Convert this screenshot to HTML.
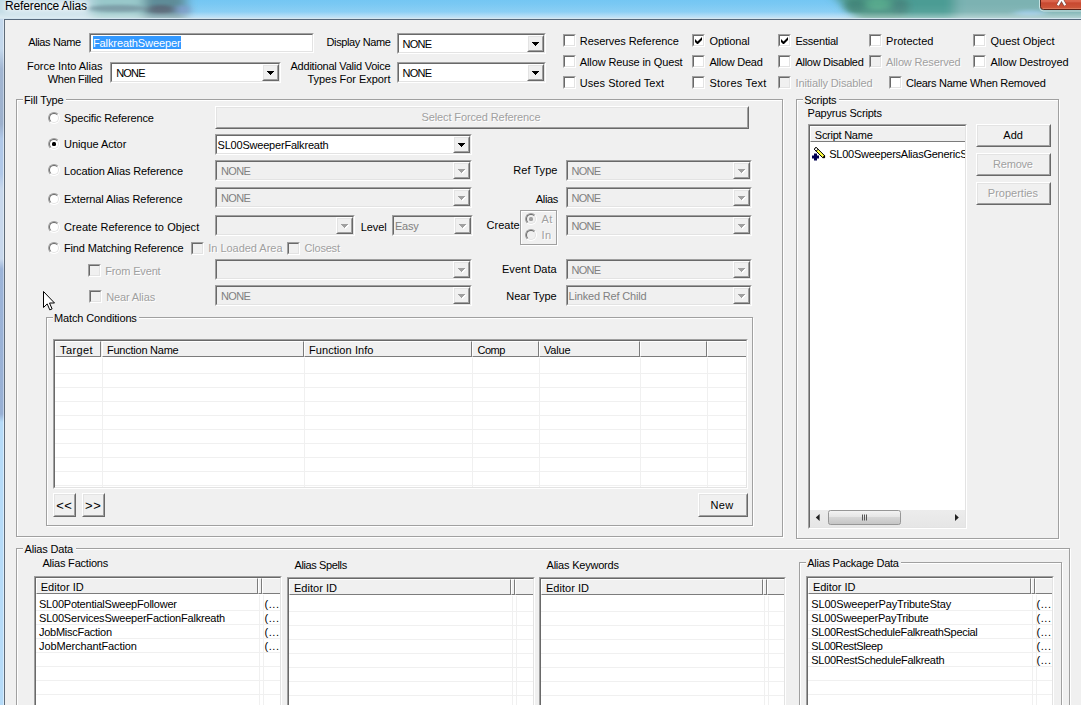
<!DOCTYPE html><html><head><meta charset="utf-8"><title>Reference Alias</title><style>
html,body{margin:0;padding:0;background:#f0f0f0;}
#w{position:relative;width:1081px;height:705px;overflow:hidden;background:#f0f0f0;font:11px/13px 'Liberation Sans',sans-serif;color:#000;}
#w div,#w span,#w svg.a,#w i,#w b{position:absolute;box-sizing:content-box;}
.t{white-space:pre;height:13px;line-height:13px;font-size:11px;}
.dis{color:#a0a0a0;text-shadow:1px 1px 0 #fff;}
.sunk{border:1px solid;border-color:#a0a0a0 #fff #fff #a0a0a0;}
.sunk::after{content:"";position:absolute;left:0;top:0;right:0;bottom:0;border:1px solid;border-color:#696969 #e3e3e3 #e3e3e3 #696969;pointer-events:none;}
.btn{border:1px solid;border-color:#fff #696969 #696969 #fff;background:#f0f0f0;}
.btn::after{content:"";position:absolute;left:0;top:0;right:0;bottom:0;border:1px solid;border-color:#e3e3e3 #a0a0a0 #a0a0a0 #e3e3e3;}
.grp{border:1px solid #a0a0a0;box-shadow:1px 1px 0 #fff, inset 1px 1px 0 #fff;}
.hd{border:1px solid;border-color:#fff #7c7c7c #7c7c7c #fff;background:#f0f0f0;}
.rad{width:10px;height:10px;border:1px solid;border-color:#a0a0a0 #fff #fff #a0a0a0;border-radius:50%;}
.rad b{left:0;top:0;width:8px;height:8px;border-radius:50%;border:1px solid;border-color:#696969 #e3e3e3 #e3e3e3 #696969;}
#tb{left:0;top:0;}
</style></head><body><div id="w"><svg class="a" id="tb" width="1081" height="20" viewBox="0 0 1081 20">
<defs>
<linearGradient id="bg" x1="0" y1="0" x2="0" y2="1"><stop offset="0" stop-color="#74c6f3"/><stop offset="0.6" stop-color="#84ccf4"/><stop offset="1" stop-color="#9fd0f0"/></linearGradient>
<linearGradient id="cl" x1="0" y1="0" x2="0" y2="1"><stop offset="0" stop-color="#e4785c"/><stop offset="0.45" stop-color="#d86048"/><stop offset="0.5" stop-color="#c84830"/><stop offset="0.85" stop-color="#cc5438"/><stop offset="1" stop-color="#e8987c"/></linearGradient>
<linearGradient id="wl" x1="0" y1="0" x2="0" y2="1"><stop offset="0" stop-color="#fff" stop-opacity="0"/><stop offset="0.55" stop-color="#fff" stop-opacity="0.06"/><stop offset="1" stop-color="#fff" stop-opacity="0.42"/></linearGradient>
<filter id="b8" x="-20%" y="-300%" width="140%" height="700%"><feGaussianBlur stdDeviation="6 3"/></filter>
<filter id="b4" x="-50%" y="-300%" width="200%" height="700%"><feGaussianBlur stdDeviation="4 1.6"/></filter>
<filter id="b2" x="-20%" y="-300%" width="140%" height="700%"><feGaussianBlur stdDeviation="2.5 2"/></filter>
</defs>
<rect width="1081" height="20" fill="url(#bg)"/>
<g filter="url(#b8)">
<rect x="-30" y="-10" width="122" height="40" fill="#c2dce6"/>
<rect x="92" y="-10" width="52" height="40" fill="#98c8ca"/>
<rect x="144" y="-10" width="42" height="40" fill="#5e8c98"/>
<path d="M830 -10L1110 -10 1110 30 866 30z" fill="#4c9484"/>
<rect x="905" y="-10" width="50" height="40" fill="#4c9c94"/>
<rect x="955" y="-10" width="160" height="40" fill="#7cb2b2"/>
</g>
<g filter="url(#b4)">
<ellipse cx="118" cy="8.5" rx="30" ry="3.5" fill="#7a9ca6"/>
<ellipse cx="161" cy="9.5" rx="14" ry="4.5" fill="#566676"/>
<ellipse cx="183" cy="10" rx="6" ry="5" fill="#7c9ccc"/>
<ellipse cx="856" cy="6" rx="10" ry="7" fill="#42867a"/>
<ellipse cx="878" cy="4" rx="12" ry="6" fill="#56a88c"/>
<ellipse cx="900" cy="7" rx="8" ry="8" fill="#468680"/>
<ellipse cx="1030" cy="13" rx="16" ry="3" fill="#94c6de"/>
</g>
<g filter="url(#b2)"><rect x="4" y="1" width="84" height="11" rx="4" fill="#fff" opacity="0.55"/></g>
<rect x="0" y="4" width="1081" height="14" fill="url(#wl)"/>
<rect x="0" y="18" width="1081" height="1" fill="#d4e6f0"/>
<rect x="4" y="19" width="1077" height="1" fill="#56697c"/>
<rect x="1039.5" y="-4" width="52" height="15" rx="4" fill="none" stroke="#e0f0f0" opacity="0.75"/>
<rect x="1040.5" y="-4" width="50" height="13.5" rx="3" fill="url(#cl)" stroke="#5a2016"/>
<path d="M1057.8 5.4L1061.5 -1.2 1065.2 5.4" fill="none" stroke="#7a4a44" stroke-width="3.4"/>
<path d="M1057.8 5.2L1061.5 -1.2 1065.2 5.2" fill="none" stroke="#fff" stroke-width="2.2"/>
</svg>
<div style="left:0;top:19px;width:3px;height:686px;background:linear-gradient(to bottom,#c4d8ec 0,#c4d8ec 30px,#a2b6d2 50px,#9cb0cc 105px,#b0c8e8 120px,#b0c8e8 155px,#c8d8ec 170px,#c8d8ec 240px,#9cb4d8 250px,#98b0d4 395px,#b6dbf8 403px,#b6dbf8 100%)"></div>
<div style="left:3px;top:19px;width:1px;height:686px;background:linear-gradient(to bottom,#dce8f4 0,#dce8f4 30px,#c4d2e4 50px,#c4d2e4 105px,#d4e2f2 120px,#dce8f4 170px,#dce8f4 240px,#c0d0e8 250px,#c0d0e8 395px,#d8ecfc 403px,#d8ecfc 100%)"></div>
<div style="left:4px;top:19px;width:1px;height:686px;background:#5f6b78"></div>
<div class="sunk" style="left:89px;top:33px;width:223px;height:18px;background:#fff;"></div>
<div class="" style="left:93px;top:36px;width:88px;height:13px;background:#3399ff;"></div>
<div class="sunk" style="left:397px;top:33px;width:147px;height:19px;background:#fff;"></div>
<div class="btn" style="left:527px;top:35px;width:15px;height:15px;"></div>
<svg class="a" style="left:532px;top:42px" width="8" height="5" viewBox="0 0 8 5"><path d="M0 0h7v1h-1v1h-1v1h-1v1h-1v-1h-1v-1h-1v-1h-1z" fill="#000"/></svg>
<div class="sunk" style="left:110px;top:62px;width:169px;height:19px;background:#fff;"></div>
<div class="btn" style="left:262px;top:64px;width:15px;height:15px;"></div>
<svg class="a" style="left:267px;top:71px" width="8" height="5" viewBox="0 0 8 5"><path d="M0 0h7v1h-1v1h-1v1h-1v1h-1v-1h-1v-1h-1v-1h-1z" fill="#000"/></svg>
<div class="sunk" style="left:397px;top:62px;width:147px;height:19px;background:#fff;"></div>
<div class="btn" style="left:527px;top:64px;width:15px;height:15px;"></div>
<svg class="a" style="left:532px;top:71px" width="8" height="5" viewBox="0 0 8 5"><path d="M0 0h7v1h-1v1h-1v1h-1v1h-1v-1h-1v-1h-1v-1h-1z" fill="#000"/></svg>
<div class="sunk" style="left:563px;top:34px;width:11px;height:11px;background:#fff;"></div>
<div class="sunk" style="left:563px;top:55px;width:11px;height:11px;background:#fff;"></div>
<div class="sunk" style="left:563px;top:76px;width:11px;height:11px;background:#fff;"></div>
<div class="sunk" style="left:692px;top:34px;width:11px;height:11px;background:#fff;"></div>
<svg class="a" style="left:695px;top:37px" width="7" height="7" viewBox="0 0 7 7"><path d="M0 2v3l2 2h1l4-4v-3l-4.5 4.5z" fill="#000"/></svg>
<div class="sunk" style="left:692px;top:55px;width:11px;height:11px;background:#fff;"></div>
<div class="sunk" style="left:692px;top:76px;width:11px;height:11px;background:#fff;"></div>
<div class="sunk" style="left:778px;top:34px;width:11px;height:11px;background:#fff;"></div>
<svg class="a" style="left:781px;top:37px" width="7" height="7" viewBox="0 0 7 7"><path d="M0 2v3l2 2h1l4-4v-3l-4.5 4.5z" fill="#000"/></svg>
<div class="sunk" style="left:778px;top:55px;width:11px;height:11px;background:#fff;"></div>
<div class="sunk" style="left:778px;top:76px;width:11px;height:11px;background:#f0f0f0;"></div>
<div class="sunk" style="left:869px;top:34px;width:11px;height:11px;background:#fff;"></div>
<div class="sunk" style="left:869px;top:55px;width:11px;height:11px;background:#f0f0f0;"></div>
<div class="sunk" style="left:973px;top:34px;width:11px;height:11px;background:#fff;"></div>
<div class="sunk" style="left:973px;top:55px;width:11px;height:11px;background:#fff;"></div>
<div class="sunk" style="left:889px;top:76px;width:11px;height:11px;background:#fff;"></div>
<div class="grp" style="left:16px;top:99px;width:765px;height:436px;"></div>
<div class="" style="left:22.5px;top:93px;width:43.5px;height:13px;background:#f0f0f0;"></div>
<div class="rad" style="left:48px;top:112px;background:#fff"><b></b></div>
<div class="rad" style="left:48px;top:138px;background:#fff"><b></b><i style="position:absolute;left:3px;top:3px;width:4px;height:4px;border-radius:1.5px;background:#000"></i></div>
<div class="rad" style="left:48px;top:164px;background:#fff"><b></b></div>
<div class="rad" style="left:48px;top:193px;background:#fff"><b></b></div>
<div class="rad" style="left:48px;top:221px;background:#fff"><b></b></div>
<div class="rad" style="left:48px;top:242px;background:#fff"><b></b></div>
<div class="sunk" style="left:191px;top:242px;width:11px;height:11px;background:#f0f0f0;"></div>
<div class="sunk" style="left:287px;top:242px;width:11px;height:11px;background:#f0f0f0;"></div>
<div class="sunk" style="left:88px;top:264px;width:11px;height:11px;background:#f0f0f0;"></div>
<div class="sunk" style="left:89px;top:290px;width:11px;height:11px;background:#f0f0f0;"></div>
<div class="btn" style="left:215px;top:106px;width:532px;height:21px;"></div>
<div class="sunk" style="left:215px;top:134px;width:255px;height:19px;background:#fff;"></div>
<div class="btn" style="left:453px;top:136px;width:15px;height:15px;"></div>
<svg class="a" style="left:458px;top:143px" width="8" height="5" viewBox="0 0 8 5"><path d="M0 0h7v1h-1v1h-1v1h-1v1h-1v-1h-1v-1h-1v-1h-1z" fill="#000"/></svg>
<div class="sunk" style="left:215px;top:160px;width:255px;height:19px;background:#f0f0f0;"></div>
<div class="btn" style="left:453px;top:162px;width:15px;height:15px;"></div>
<svg class="a" style="left:458px;top:169px" width="8" height="5" viewBox="0 0 8 5"><path transform="translate(1 1)" d="M0 0h7v1h-1v1h-1v1h-1v1h-1v-1h-1v-1h-1v-1h-1z" fill="#fff"/><path d="M0 0h7v1h-1v1h-1v1h-1v1h-1v-1h-1v-1h-1v-1h-1z" fill="#a0a0a0"/></svg>
<div class="sunk" style="left:215px;top:187px;width:255px;height:19px;background:#f0f0f0;"></div>
<div class="btn" style="left:453px;top:189px;width:15px;height:15px;"></div>
<svg class="a" style="left:458px;top:196px" width="8" height="5" viewBox="0 0 8 5"><path transform="translate(1 1)" d="M0 0h7v1h-1v1h-1v1h-1v1h-1v-1h-1v-1h-1v-1h-1z" fill="#fff"/><path d="M0 0h7v1h-1v1h-1v1h-1v1h-1v-1h-1v-1h-1v-1h-1z" fill="#a0a0a0"/></svg>
<div class="sunk" style="left:215px;top:215px;width:138px;height:19px;background:#f0f0f0;"></div>
<div class="btn" style="left:336px;top:217px;width:15px;height:15px;"></div>
<svg class="a" style="left:341px;top:224px" width="8" height="5" viewBox="0 0 8 5"><path transform="translate(1 1)" d="M0 0h7v1h-1v1h-1v1h-1v1h-1v-1h-1v-1h-1v-1h-1z" fill="#fff"/><path d="M0 0h7v1h-1v1h-1v1h-1v1h-1v-1h-1v-1h-1v-1h-1z" fill="#a0a0a0"/></svg>
<div class="sunk" style="left:392px;top:215px;width:79px;height:19px;background:#f0f0f0;"></div>
<div class="btn" style="left:454px;top:217px;width:15px;height:15px;"></div>
<svg class="a" style="left:459px;top:224px" width="8" height="5" viewBox="0 0 8 5"><path transform="translate(1 1)" d="M0 0h7v1h-1v1h-1v1h-1v1h-1v-1h-1v-1h-1v-1h-1z" fill="#fff"/><path d="M0 0h7v1h-1v1h-1v1h-1v1h-1v-1h-1v-1h-1v-1h-1z" fill="#a0a0a0"/></svg>
<div class="sunk" style="left:215px;top:259px;width:255px;height:19px;background:#f0f0f0;"></div>
<div class="btn" style="left:453px;top:261px;width:15px;height:15px;"></div>
<svg class="a" style="left:458px;top:268px" width="8" height="5" viewBox="0 0 8 5"><path transform="translate(1 1)" d="M0 0h7v1h-1v1h-1v1h-1v1h-1v-1h-1v-1h-1v-1h-1z" fill="#fff"/><path d="M0 0h7v1h-1v1h-1v1h-1v1h-1v-1h-1v-1h-1v-1h-1z" fill="#a0a0a0"/></svg>
<div class="sunk" style="left:215px;top:285px;width:255px;height:19px;background:#f0f0f0;"></div>
<div class="btn" style="left:453px;top:287px;width:15px;height:15px;"></div>
<svg class="a" style="left:458px;top:294px" width="8" height="5" viewBox="0 0 8 5"><path transform="translate(1 1)" d="M0 0h7v1h-1v1h-1v1h-1v1h-1v-1h-1v-1h-1v-1h-1z" fill="#fff"/><path d="M0 0h7v1h-1v1h-1v1h-1v1h-1v-1h-1v-1h-1v-1h-1z" fill="#a0a0a0"/></svg>
<div class="sunk" style="left:566px;top:160px;width:184px;height:19px;background:#f0f0f0;"></div>
<div class="btn" style="left:733px;top:162px;width:15px;height:15px;"></div>
<svg class="a" style="left:738px;top:169px" width="8" height="5" viewBox="0 0 8 5"><path transform="translate(1 1)" d="M0 0h7v1h-1v1h-1v1h-1v1h-1v-1h-1v-1h-1v-1h-1z" fill="#fff"/><path d="M0 0h7v1h-1v1h-1v1h-1v1h-1v-1h-1v-1h-1v-1h-1z" fill="#a0a0a0"/></svg>
<div class="sunk" style="left:566px;top:187px;width:184px;height:19px;background:#f0f0f0;"></div>
<div class="btn" style="left:733px;top:189px;width:15px;height:15px;"></div>
<svg class="a" style="left:738px;top:196px" width="8" height="5" viewBox="0 0 8 5"><path transform="translate(1 1)" d="M0 0h7v1h-1v1h-1v1h-1v1h-1v-1h-1v-1h-1v-1h-1z" fill="#fff"/><path d="M0 0h7v1h-1v1h-1v1h-1v1h-1v-1h-1v-1h-1v-1h-1z" fill="#a0a0a0"/></svg>
<div class="sunk" style="left:566px;top:215px;width:184px;height:19px;background:#f0f0f0;"></div>
<div class="btn" style="left:733px;top:217px;width:15px;height:15px;"></div>
<svg class="a" style="left:738px;top:224px" width="8" height="5" viewBox="0 0 8 5"><path transform="translate(1 1)" d="M0 0h7v1h-1v1h-1v1h-1v1h-1v-1h-1v-1h-1v-1h-1z" fill="#fff"/><path d="M0 0h7v1h-1v1h-1v1h-1v1h-1v-1h-1v-1h-1v-1h-1z" fill="#a0a0a0"/></svg>
<div class="sunk" style="left:566px;top:259px;width:184px;height:19px;background:#f0f0f0;"></div>
<div class="btn" style="left:733px;top:261px;width:15px;height:15px;"></div>
<svg class="a" style="left:738px;top:268px" width="8" height="5" viewBox="0 0 8 5"><path transform="translate(1 1)" d="M0 0h7v1h-1v1h-1v1h-1v1h-1v-1h-1v-1h-1v-1h-1z" fill="#fff"/><path d="M0 0h7v1h-1v1h-1v1h-1v1h-1v-1h-1v-1h-1v-1h-1z" fill="#a0a0a0"/></svg>
<div class="sunk" style="left:566px;top:285px;width:184px;height:19px;background:#f0f0f0;"></div>
<div class="btn" style="left:733px;top:287px;width:15px;height:15px;"></div>
<svg class="a" style="left:738px;top:294px" width="8" height="5" viewBox="0 0 8 5"><path transform="translate(1 1)" d="M0 0h7v1h-1v1h-1v1h-1v1h-1v-1h-1v-1h-1v-1h-1z" fill="#fff"/><path d="M0 0h7v1h-1v1h-1v1h-1v1h-1v-1h-1v-1h-1v-1h-1z" fill="#a0a0a0"/></svg>
<div class="grp" style="left:520px;top:210px;width:35px;height:33px;"></div>
<div class="rad" style="left:525px;top:213px;background:#f0f0f0"><b></b><i style="position:absolute;left:3px;top:3px;width:4px;height:4px;border-radius:1.5px;background:#a0a0a0"></i></div>
<div class="rad" style="left:525px;top:228.5px;background:#f0f0f0"><b></b></div>
<svg class="a" style="left:42px;top:290px" width="14" height="22" viewBox="0 0 14 22"><path d="M1.5 1.5v16l3.7-3.6 2.6 6 2.3-1-2.6-5.9h5z" fill="#fff" stroke="#000" stroke-width="1"/></svg>
<div class="grp" style="left:46px;top:317px;width:705px;height:207px;"></div>
<div class="" style="left:52.5px;top:311px;width:86.75px;height:13px;background:#f0f0f0;"></div>
<div class="sunk lv" style="left:53px;top:339px;width:693px;height:148px;background:#fff;overflow:hidden;"><div style="left:1px;top:1px;width:691px;height:16px;background:#f0f0f0;"></div><div class="hd" style="left:1px;top:1px;width:44px;height:14px"></div><div class="hd" style="left:48px;top:1px;width:200px;height:14px"></div><div class="hd" style="left:250px;top:1px;width:166px;height:14px"></div><div class="hd" style="left:418px;top:1px;width:65px;height:14px"></div><div class="hd" style="left:485px;top:1px;width:99px;height:14px"></div><div class="hd" style="left:586px;top:1px;width:65px;height:14px"></div><div class="hd" style="left:653px;top:1px;width:58px;height:14px"></div><div style="left:1px;top:20px;width:691px;height:127px;background:repeating-linear-gradient(to bottom,transparent 0,transparent 13px,#f0f0f0 13px,#f0f0f0 14px)"></div><div style="left:48px;top:18px;width:1px;height:129px;background:#f0f0f0"></div><div style="left:250px;top:18px;width:1px;height:129px;background:#f0f0f0"></div><div style="left:418px;top:18px;width:1px;height:129px;background:#f0f0f0"></div><div style="left:485px;top:18px;width:1px;height:129px;background:#f0f0f0"></div><div style="left:586px;top:18px;width:1px;height:129px;background:#f0f0f0"></div><div style="left:653px;top:18px;width:1px;height:129px;background:#f0f0f0"></div></div>
<div class="btn" style="left:53px;top:493px;width:21px;height:22px;"></div>
<div class="btn" style="left:82px;top:493px;width:21px;height:22px;"></div>
<div class="btn" style="left:698px;top:493px;width:48px;height:22px;"></div>
<div class="grp" style="left:796px;top:99px;width:261px;height:438px;"></div>
<div class="" style="left:802.7px;top:93px;width:36.09999999999991px;height:13px;background:#f0f0f0;"></div>
<div class="sunk lv" style="left:808px;top:124px;width:157px;height:403px;background:#fff;overflow:hidden;"><div style="left:1px;top:1px;width:155px;height:16px;background:#f0f0f0;"></div><div class="hd" style="left:1px;top:1px;width:168px;height:14px"></div></div>
<svg class="a" style="left:812px;top:147px" width="14" height="14" viewBox="0 0 14 14"><path d="M2.2 2.2L4.2 0.3 12.6 8.7 12.6 10.7 10.7 10.7z" fill="#ffff40" stroke="#000" stroke-width="1"/><path d="M2.2 2.2L4.2 0.3 6 2.2 4.2 4.2z" fill="#fff" stroke="#000" stroke-width="1"/><path d="M10 10.8h3v-3z" fill="#000"/><path d="M2 6.5h3v2h2v3h-2v2h-3v-2h-2v-3h2z" fill="#000050"/></svg>
<div class="" style="left:829px;top:148px;width:135px;height:14px;overflow:hidden;"></div>
<div class="" style="left:810px;top:510px;width:155px;height:17px;background:linear-gradient(to bottom,#ececec,#e6e6e6);"></div>
<svg class="a" style="left:810px;top:510px" width="154" height="16" viewBox="0 0 154 16"><defs><linearGradient id="tg" x1="0" y1="0" x2="0" y2="1"><stop offset="0" stop-color="#f4f4f4"/><stop offset="0.5" stop-color="#e4e4e4"/><stop offset="0.5" stop-color="#d6d6d6"/><stop offset="1" stop-color="#c4c4c4"/></linearGradient></defs><rect x="18.5" y="0.5" width="72" height="14" rx="2" fill="url(#tg)" stroke="#979797"/><path d="M52.5 4.5v6M54.5 4.5v6M56.5 4.5v6" stroke="#555"/><path d="M9.6 4v7l-3.8-3.5z" fill="#222"/><path d="M145 4v7l3.8-3.5z" fill="#222"/></svg>
<div class="btn" style="left:976px;top:124px;width:73px;height:21px;"></div>
<div class="btn" style="left:976px;top:153px;width:73px;height:21px;"></div>
<div class="btn" style="left:976px;top:182px;width:73px;height:21px;"></div>
<div class="grp" style="left:16px;top:548px;width:1052px;height:298px;"></div>
<div class="" style="left:23px;top:542px;width:52.5px;height:13px;background:#f0f0f0;"></div>
<div class="sunk lv" style="left:34px;top:576px;width:246px;height:198px;background:#fff;overflow:hidden;"><div style="left:1px;top:1px;width:244px;height:16px;background:#f0f0f0;"></div><div class="hd" style="left:1px;top:1px;width:220px;height:14px"></div><div class="hd" style="left:223px;top:1px;width:2px;height:14px"></div><div class="hd" style="left:227px;top:1px;width:58px;height:14px"></div><div style="left:1px;top:20px;width:244px;height:177px;background:repeating-linear-gradient(to bottom,transparent 0,transparent 13px,#f0f0f0 13px,#f0f0f0 14px)"></div><div style="left:224px;top:18px;width:1px;height:179px;background:#f0f0f0"></div><div style="left:228px;top:18px;width:1px;height:179px;background:#f0f0f0"></div></div>
<div class="sunk lv" style="left:287px;top:577px;width:246px;height:198px;background:#fff;overflow:hidden;"><div style="left:1px;top:1px;width:244px;height:16px;background:#f0f0f0;"></div><div class="hd" style="left:1px;top:1px;width:220px;height:14px"></div><div class="hd" style="left:223px;top:1px;width:2px;height:14px"></div><div class="hd" style="left:227px;top:1px;width:58px;height:14px"></div><div style="left:1px;top:20px;width:244px;height:177px;background:repeating-linear-gradient(to bottom,transparent 0,transparent 13px,#f0f0f0 13px,#f0f0f0 14px)"></div><div style="left:224px;top:18px;width:1px;height:179px;background:#f0f0f0"></div><div style="left:228px;top:18px;width:1px;height:179px;background:#f0f0f0"></div></div>
<div class="sunk lv" style="left:539px;top:577px;width:245px;height:198px;background:#fff;overflow:hidden;"><div style="left:1px;top:1px;width:243px;height:16px;background:#f0f0f0;"></div><div class="hd" style="left:1px;top:1px;width:220px;height:14px"></div><div class="hd" style="left:223px;top:1px;width:2px;height:14px"></div><div class="hd" style="left:227px;top:1px;width:58px;height:14px"></div><div style="left:1px;top:20px;width:243px;height:177px;background:repeating-linear-gradient(to bottom,transparent 0,transparent 13px,#f0f0f0 13px,#f0f0f0 14px)"></div><div style="left:224px;top:18px;width:1px;height:179px;background:#f0f0f0"></div><div style="left:228px;top:18px;width:1px;height:179px;background:#f0f0f0"></div></div>
<div class="grp" style="left:799px;top:562px;width:261px;height:298px;"></div>
<div class="" style="left:805.7px;top:556px;width:95.5px;height:13px;background:#f0f0f0;"></div>
<div class="sunk lv" style="left:806px;top:576px;width:246px;height:198px;background:#fff;overflow:hidden;"><div style="left:1px;top:1px;width:244px;height:16px;background:#f0f0f0;"></div><div class="hd" style="left:1px;top:1px;width:221px;height:14px"></div><div class="hd" style="left:224px;top:1px;width:2px;height:14px"></div><div class="hd" style="left:228px;top:1px;width:58px;height:14px"></div><div style="left:1px;top:20px;width:244px;height:177px;background:repeating-linear-gradient(to bottom,transparent 0,transparent 13px,#f0f0f0 13px,#f0f0f0 14px)"></div><div style="left:225px;top:18px;width:1px;height:179px;background:#f0f0f0"></div><div style="left:229px;top:18px;width:1px;height:179px;background:#f0f0f0"></div></div>
<span class="t" style="left:28.20px;top:36.00px;letter-spacing:-0.365px;">Alias Name</span>
<span class="t" style="left:93.00px;top:36.70px;letter-spacing:-0.111px;color:#fff;">FalkreathSweeper</span>
<span class="t" style="left:326.50px;top:36.00px;letter-spacing:-0.372px;">Display Name</span>
<span class="t" style="left:402.50px;top:37.50px;letter-spacing:-0.695px;">NONE</span>
<span class="t" style="left:27.00px;top:59.70px;letter-spacing:-0.021px;">Force Into Alias</span>
<span class="t" style="left:47.80px;top:72.70px;letter-spacing:-0.307px;">When Filled</span>
<span class="t" style="left:116.20px;top:66.70px;letter-spacing:-0.820px;">NONE</span>
<span class="t" style="left:290.50px;top:60.00px;letter-spacing:-0.227px;">Additional Valid Voice</span>
<span class="t" style="left:307.50px;top:72.50px;letter-spacing:-0.048px;">Types For Export</span>
<span class="t" style="left:402.50px;top:66.50px;letter-spacing:-0.695px;">NONE</span>
<span class="t" style="left:579.80px;top:35.00px;letter-spacing:-0.071px;">Reserves Reference</span>
<span class="t" style="left:579.80px;top:56.00px;letter-spacing:-0.124px;">Allow Reuse in Quest</span>
<span class="t" style="left:579.80px;top:77.00px;letter-spacing:0.052px;">Uses Stored Text</span>
<span class="t" style="left:709.50px;top:35.00px;letter-spacing:-0.123px;">Optional</span>
<span class="t" style="left:709.50px;top:56.00px;letter-spacing:-0.264px;">Allow Dead</span>
<span class="t" style="left:709.50px;top:77.00px;letter-spacing:0.197px;">Stores Text</span>
<span class="t" style="left:795.50px;top:35.00px;letter-spacing:-0.238px;">Essential</span>
<span class="t" style="left:795.50px;top:56.00px;letter-spacing:-0.297px;">Allow Disabled</span>
<span class="t dis" style="left:795.50px;top:77.00px;letter-spacing:-0.138px;">Initially Disabled</span>
<span class="t" style="left:886.10px;top:35.00px;letter-spacing:0.034px;">Protected</span>
<span class="t dis" style="left:886.10px;top:56.00px;letter-spacing:-0.144px;">Allow Reserved</span>
<span class="t" style="left:990.50px;top:35.00px;letter-spacing:-0.017px;">Quest Object</span>
<span class="t" style="left:990.50px;top:56.00px;letter-spacing:-0.099px;">Allow Destroyed</span>
<span class="t" style="left:906.10px;top:77.00px;letter-spacing:-0.280px;">Clears Name When Removed</span>
<span class="t" style="left:24.00px;top:94.00px;letter-spacing:-0.141px;">Fill Type</span>
<span class="t" style="left:64.00px;top:112.00px;letter-spacing:-0.143px;">Specific Reference</span>
<span class="t" style="left:64.00px;top:138.25px;letter-spacing:-0.061px;">Unique Actor</span>
<span class="t" style="left:64.00px;top:164.50px;letter-spacing:-0.112px;">Location Alias Reference</span>
<span class="t" style="left:64.00px;top:192.75px;letter-spacing:-0.081px;">External Alias Reference</span>
<span class="t" style="left:64.00px;top:221.00px;letter-spacing:0.052px;">Create Reference to Object</span>
<span class="t" style="left:64.00px;top:242.00px;letter-spacing:-0.148px;">Find Matching Reference</span>
<span class="t dis" style="left:208.25px;top:242.00px;letter-spacing:-0.027px;">In Loaded Area</span>
<span class="t dis" style="left:304.50px;top:242.00px;letter-spacing:-0.205px;">Closest</span>
<span class="t dis" style="left:105.25px;top:265.00px;letter-spacing:-0.161px;">From Event</span>
<span class="t dis" style="left:106.25px;top:290.75px;letter-spacing:-0.139px;">Near Alias</span>
<span class="t dis" style="left:421.50px;top:111.00px;letter-spacing:-0.116px;">Select Forced Reference</span>
<span class="t" style="left:217.50px;top:139.00px;letter-spacing:-0.198px;">SL00SweeperFalkreath</span>
<span class="t" style="left:221.10px;top:165.00px;letter-spacing:-0.720px;color:#808080;">NONE</span>
<span class="t" style="left:221.10px;top:192.00px;letter-spacing:-0.720px;color:#808080;">NONE</span>
<span class="t" style="left:360.75px;top:220.75px;letter-spacing:-0.059px;">Level</span>
<span class="t" style="left:395.00px;top:220.00px;letter-spacing:-0.242px;color:#808080;">Easy</span>
<span class="t" style="left:221.10px;top:290.00px;letter-spacing:-0.720px;color:#808080;">NONE</span>
<span class="t" style="left:513.25px;top:164.00px;letter-spacing:0.053px;">Ref Type</span>
<span class="t" style="left:535.75px;top:192.75px;letter-spacing:-0.319px;">Alias</span>
<span class="t" style="left:486.50px;top:218.75px;letter-spacing:0.036px;">Create</span>
<span class="t" style="left:502.00px;top:263.25px;letter-spacing:0.033px;">Event Data</span>
<span class="t" style="left:506.25px;top:289.50px;letter-spacing:-0.007px;">Near Type</span>
<span class="t" style="left:571.50px;top:165.00px;letter-spacing:-0.695px;color:#808080;">NONE</span>
<span class="t" style="left:571.50px;top:192.00px;letter-spacing:-0.695px;color:#808080;">NONE</span>
<span class="t" style="left:571.50px;top:220.00px;letter-spacing:-0.695px;color:#808080;">NONE</span>
<span class="t" style="left:571.50px;top:264.00px;letter-spacing:-0.695px;color:#808080;">NONE</span>
<span class="t" style="left:568.50px;top:290.00px;letter-spacing:-0.170px;color:#808080;">Linked Ref Child</span>
<span class="t dis" style="left:541.50px;top:213.00px;letter-spacing:0.297px;">At</span>
<span class="t dis" style="left:541.50px;top:228.50px;letter-spacing:0.406px;">In</span>
<span class="t" style="left:54.00px;top:312.00px;letter-spacing:-0.141px;">Match Conditions</span>
<span class="t" style="left:60.00px;top:344.00px;letter-spacing:0.404px;">Target</span>
<span class="t" style="left:107.00px;top:344.00px;letter-spacing:-0.238px;">Function Name</span>
<span class="t" style="left:309.00px;top:344.00px;letter-spacing:0.070px;">Function Info</span>
<span class="t" style="left:477.50px;top:344.00px;letter-spacing:-0.523px;">Comp</span>
<span class="t" style="left:544.00px;top:344.00px;letter-spacing:-0.166px;">Value</span>
<span class="t" style="left:56.20px;top:497.50px;letter-spacing:0.406px;font-size:13px;line-height:15px;">&lt;&lt;</span>
<span class="t" style="left:85.10px;top:497.50px;letter-spacing:0.456px;font-size:13px;line-height:15px;">&gt;&gt;</span>
<span class="t" style="left:710.50px;top:499.00px;letter-spacing:0.328px;">New</span>
<span class="t" style="left:804.20px;top:93.50px;letter-spacing:-0.218px;">Scripts</span>
<span class="t" style="left:807.50px;top:106.70px;letter-spacing:-0.182px;">Papyrus Scripts</span>
<span class="t" style="left:814.80px;top:128.70px;letter-spacing:-0.257px;">Script Name</span>
<span class="t" style="left:829.20px;top:148.00px;width:135.5px;overflow:hidden;letter-spacing:-0.25px;">SL00SweepersAliasGenericSc</span>
<span class="t" style="left:1003.20px;top:128.60px;letter-spacing:0.107px;">Add</span>
<span class="t dis" style="left:993.00px;top:157.80px;letter-spacing:-0.195px;">Remove</span>
<span class="t dis" style="left:987.80px;top:186.70px;letter-spacing:0.006px;">Properties</span>
<span class="t" style="left:24.50px;top:542.75px;letter-spacing:-0.164px;">Alias Data</span>
<span class="t" style="left:42.50px;top:557.00px;letter-spacing:-0.213px;">Alias Factions</span>
<span class="t" style="left:40.75px;top:580.75px;letter-spacing:0.023px;">Editor ID</span>
<span class="t" style="left:39.00px;top:598.00px;letter-spacing:-0.229px;">SL00PotentialSweepFollower</span>
<span class="t" style="left:264.50px;top:598.00px;letter-spacing:0.539px;">(...</span>
<span class="t" style="left:39.00px;top:612.00px;letter-spacing:-0.206px;">SL00ServicesSweeperFactionFalkreath</span>
<span class="t" style="left:264.50px;top:612.00px;letter-spacing:0.539px;">(...</span>
<span class="t" style="left:39.00px;top:626.00px;letter-spacing:-0.262px;">JobMiscFaction</span>
<span class="t" style="left:264.50px;top:626.00px;letter-spacing:0.539px;">(...</span>
<span class="t" style="left:39.00px;top:640.00px;letter-spacing:-0.107px;">JobMerchantFaction</span>
<span class="t" style="left:264.50px;top:640.00px;letter-spacing:0.539px;">(...</span>
<span class="t" style="left:294.50px;top:558.50px;letter-spacing:-0.384px;">Alias Spells</span>
<span class="t" style="left:294.00px;top:581.50px;letter-spacing:0.023px;">Editor ID</span>
<span class="t" style="left:546.50px;top:558.50px;letter-spacing:-0.211px;">Alias Keywords</span>
<span class="t" style="left:546.00px;top:581.50px;letter-spacing:0.023px;">Editor ID</span>
<span class="t" style="left:807.20px;top:556.80px;letter-spacing:-0.250px;">Alias Package Data</span>
<span class="t" style="left:812.90px;top:580.50px;letter-spacing:-0.022px;">Editor ID</span>
<span class="t" style="left:811.30px;top:598.00px;letter-spacing:-0.168px;">SL00SweeperPayTributeStay</span>
<span class="t" style="left:1036.50px;top:598.00px;letter-spacing:0.539px;">(...</span>
<span class="t" style="left:811.30px;top:612.00px;letter-spacing:-0.223px;">SL00SweeperPayTribute</span>
<span class="t" style="left:1036.50px;top:612.00px;letter-spacing:0.539px;">(...</span>
<span class="t" style="left:811.30px;top:626.00px;letter-spacing:-0.310px;">SL00RestScheduleFalkreathSpecial</span>
<span class="t" style="left:1036.50px;top:626.00px;letter-spacing:0.539px;">(...</span>
<span class="t" style="left:811.30px;top:640.00px;letter-spacing:-0.404px;">SL00RestSleep</span>
<span class="t" style="left:1036.50px;top:640.00px;letter-spacing:0.539px;">(...</span>
<span class="t" style="left:811.30px;top:654.00px;letter-spacing:-0.281px;">SL00RestScheduleFalkreath</span>
<span class="t" style="left:1036.50px;top:654.00px;letter-spacing:0.539px;">(...</span>
<span class="t ttl" style="left:5.10px;top:-1.25px;letter-spacing:-0.160px;font-size:12px;line-height:14px;">Reference Alias</span></div></body></html>
